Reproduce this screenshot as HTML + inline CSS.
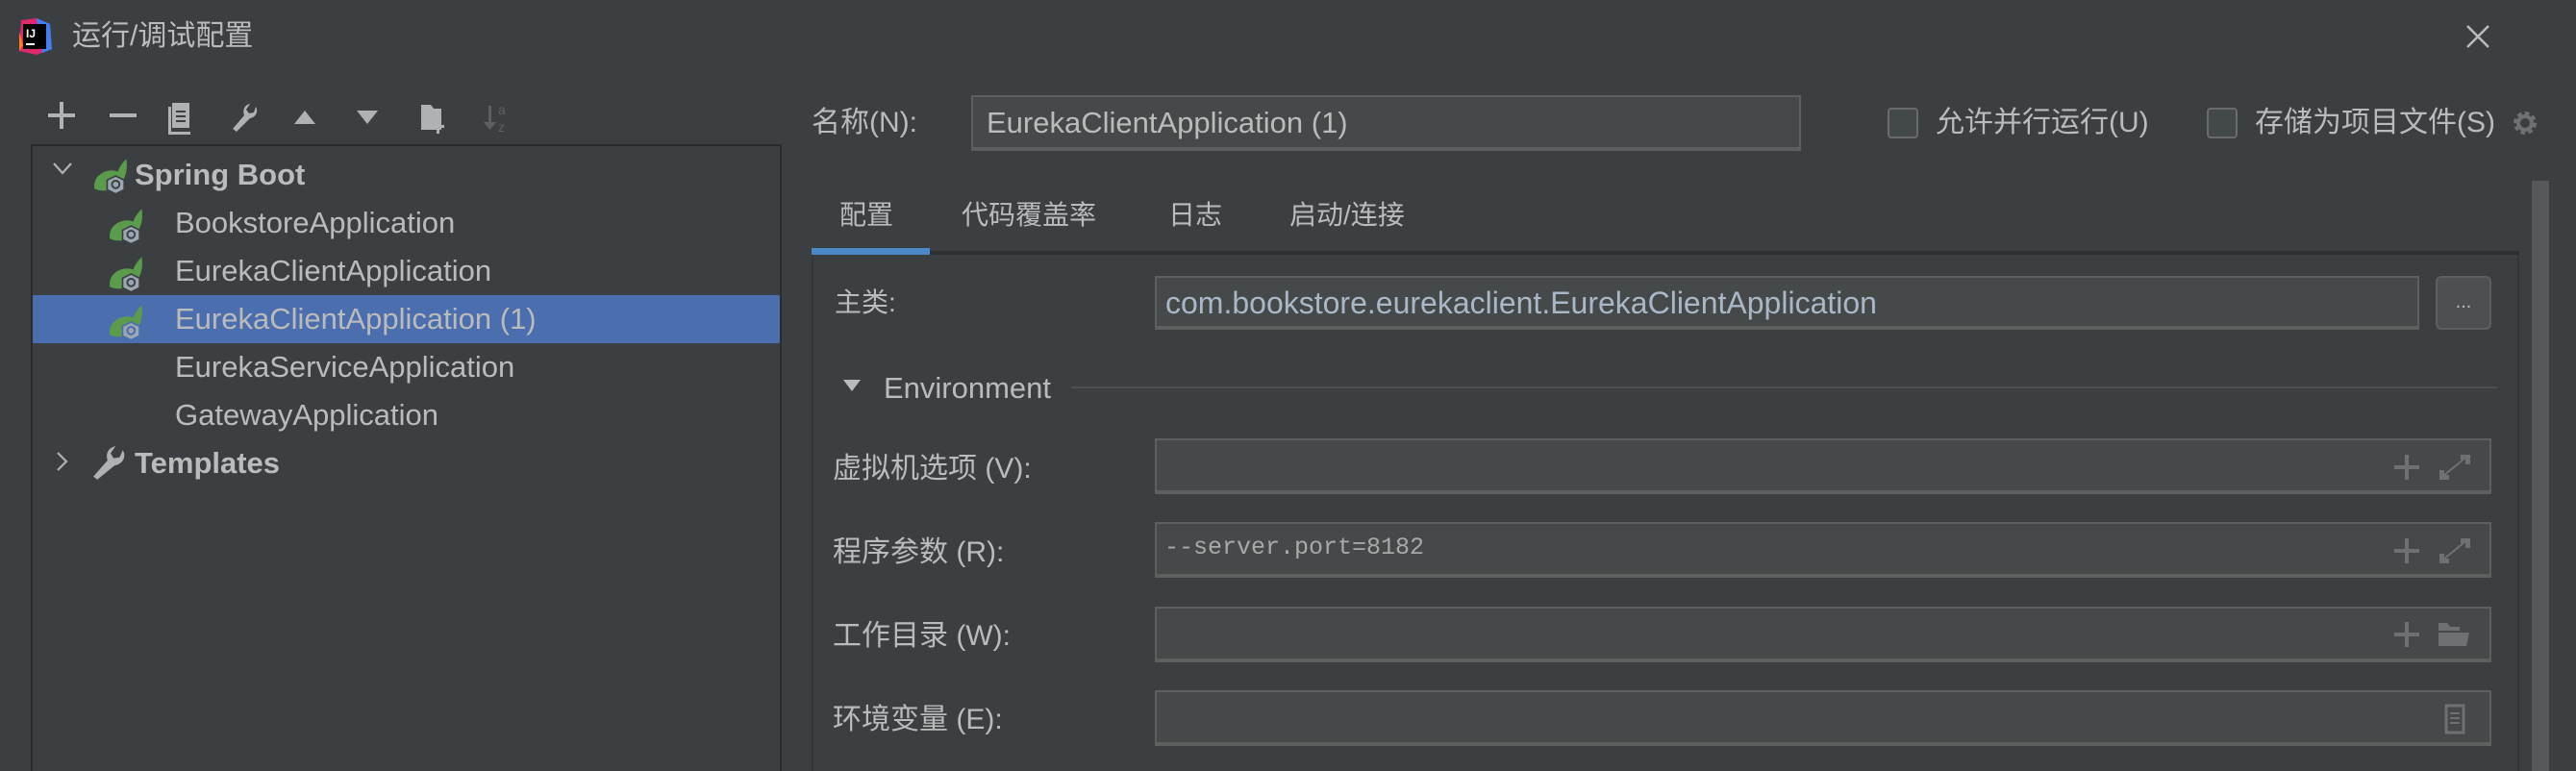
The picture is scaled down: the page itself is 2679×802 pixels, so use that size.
<!DOCTYPE html>
<html style="overflow:hidden;height:802px"><head><meta charset="utf-8"><style>
*{box-sizing:border-box;margin:0;padding:0}
body{width:2679px;height:802px;background:#3c3f41;overflow:hidden;position:relative;font-family:"Liberation Sans","Noto Sans CJK SC",sans-serif;color:#bbbbbb;font-size:28px}
.a{position:absolute;white-space:nowrap}
.inp{position:absolute;background:#45494a;border:2px solid #5e6060;border-bottom:4px solid #5e6060}
.lbl{position:absolute;line-height:40px;white-space:nowrap}
.row{position:absolute;left:0;height:50px;line-height:50px;font-size:31px;white-space:nowrap}
svg{position:absolute}
</style></head><body>
<svg style="left:16px;top:17px" width="40" height="42" viewBox="0 0 40 42">
<path d="M6 4 L22 2 L36 8 L38 34 L22 40 L4 36 Z" fill="#e0286f"/>
<path d="M22 2 L36 8 L38 34 L28 38 Z" fill="#3f7ff5"/>
<path d="M4 16 L8 30 L4 36Z" fill="#fc801d"/>
<rect x="8" y="8" width="24" height="26" fill="#000"/>
<text x="11" y="22" font-size="12" font-family="Liberation Sans" font-weight="bold" fill="#fff">IJ</text>
<rect x="11" y="28" width="9" height="2" fill="#fff"/>
</svg>
<div class="a" style="left:75px;top:16px;font-size:30px;line-height:44px;color:#bbbbbb">运行/调试配置</div>
<svg style="left:2563px;top:24px" width="28" height="28"><path d="M3 3L25 25M25 3L3 25" stroke="#bbb" stroke-width="2.5"/></svg>

<svg style="left:50px;top:104px" width="500" height="36" viewBox="0 0 500 34" fill="#afb1b3">
<rect x="0" y="13" width="28" height="4"/><rect x="12" y="1" width="4" height="28"/>
<rect x="64" y="13" width="28" height="4"/>
<path d="M129 2h18v26h-18z M125 6h3v26h20v3h-23z" /><rect x="133" y="10" width="10" height="2" fill="#3c3f41"/><rect x="133" y="15" width="10" height="2" fill="#3c3f41"/><rect x="133" y="20" width="10" height="2" fill="#3c3f41"/>
<path d="M196 32l-4-3 12-14c-2-5 0-11 6-12l-4 6 3 4 5-1 2-6c3 5 0 11-6 12z"/>
<path d="M256 24l11-14 11 14z"/>
<path d="M321 10h22l-11 14z"/>
<path d="M388 4h10l3 4h8v22h-21z"/><rect x="404" y="20" width="3" height="14"/><rect x="399" y="25" width="13" height="3"/>
<g fill="#5e6060"><rect x="458" y="5" width="3" height="22"/><path d="M453 22h13l-6.5 8z"/><text x="468" y="14" font-size="14" font-family="Liberation Sans">a</text><text x="468" y="32" font-size="14" font-family="Liberation Sans">z</text></g>
</svg>

<div style="position:absolute;left:32px;top:150px;width:781px;height:652px;border:2px solid #2b2b2b;border-bottom:none;background:#3c3f41;overflow:hidden">
<svg style="left:20px;top:16px" width="22" height="14"><path d="M2 2l9 10 9-10" stroke="#afb1b3" stroke-width="2.2" fill="none"/></svg>
<div class="row" style="top:5px;left:62px;width:700px">
<svg style="left:0;top:6px" width="42" height="40" viewBox="0 0 38 36"><path d="M2 30c-2-14 14-20 22-16 2-6 6-10 8-12 2 12-2 24-12 28-8 3-14 2-18 0z" fill="#5a9b4c"/><path d="M22 18l8 4v9l-8 4-8-4v-9z" fill="#9aa7b0" stroke="#3c3f41" stroke-width="1.5"/><circle cx="22" cy="26" r="3.5" fill="none" stroke="#3c3f41" stroke-width="1.8"/></svg>
<span style="position:absolute;left:44px;font-weight:bold;font-size:31px">Spring Boot</span></div>
<div class="row" style="top:55px;left:0;width:777px"><svg style="left:78px;top:8px" width="42" height="40" viewBox="0 0 38 36"><path d="M2 30c-2-14 14-20 22-16 2-6 6-10 8-12 2 12-2 24-12 28-8 3-14 2-18 0z" fill="#5a9b4c"/><path d="M22 18l8 4v9l-8 4-8-4v-9z" fill="#9aa7b0" stroke="#3c3f41" stroke-width="1.5"/><circle cx="22" cy="26" r="3.5" fill="none" stroke="#3c3f41" stroke-width="1.8"/></svg><span style="position:absolute;left:148px">BookstoreApplication</span></div>
<div class="row" style="top:105px;left:0;width:777px"><svg style="left:78px;top:8px" width="42" height="40" viewBox="0 0 38 36"><path d="M2 30c-2-14 14-20 22-16 2-6 6-10 8-12 2 12-2 24-12 28-8 3-14 2-18 0z" fill="#5a9b4c"/><path d="M22 18l8 4v9l-8 4-8-4v-9z" fill="#9aa7b0" stroke="#3c3f41" stroke-width="1.5"/><circle cx="22" cy="26" r="3.5" fill="none" stroke="#3c3f41" stroke-width="1.8"/></svg><span style="position:absolute;left:148px">EurekaClientApplication</span></div>
<div class="row" style="top:155px;left:0;width:777px;background:#4b6eaf"><svg style="left:78px;top:8px" width="42" height="40" viewBox="0 0 38 36"><path d="M2 30c-2-14 14-20 22-16 2-6 6-10 8-12 2 12-2 24-12 28-8 3-14 2-18 0z" fill="#5a9b4c"/><path d="M22 18l8 4v9l-8 4-8-4v-9z" fill="#9aa7b0" stroke="#4b6eaf" stroke-width="1.5"/><circle cx="22" cy="26" r="3.5" fill="none" stroke="#4b6eaf" stroke-width="1.8"/></svg><span style="position:absolute;left:148px">EurekaClientApplication (1)</span></div>
<div class="row" style="top:205px;left:148px">EurekaServiceApplication</div>
<div class="row" style="top:255px;left:148px">GatewayApplication</div>
<svg style="left:24px;top:317px" width="14" height="22"><path d="M2 2l9 9-9 9" stroke="#afb1b3" stroke-width="2.2" fill="none"/></svg>
<svg style="left:62px;top:311px" width="38" height="38" viewBox="0 0 36 36"><path d="M5 34l-4-3 14-16c-2-6 0-12 8-14l-5 7 3 5 6-1 3-7c4 6 0 14-8 15z" fill="#afb1b3"/></svg>
<div class="row" style="top:305px;left:106px;font-weight:bold">Templates</div>
</div>

<div class="lbl" style="left:844px;top:108px;font-size:30px">名称(N):</div>
<div class="inp" style="left:1010px;top:99px;width:863px;height:58px"></div>
<div class="lbl" style="left:1026px;top:108px;font-size:31px">EurekaClientApplication (1)</div>
<div class="a" style="left:1963px;top:112px;width:32px;height:32px;border:2px solid #6b6b6b;border-radius:4px;background:#43494a"></div>
<div class="lbl" style="left:2013px;top:108px;font-size:30px">允许并行运行(U)</div>
<div class="a" style="left:2295px;top:112px;width:32px;height:32px;border:2px solid #6b6b6b;border-radius:4px;background:#43494a"></div>
<div class="lbl" style="left:2345px;top:108px;font-size:30px">存储为项目文件(S)</div>
<svg style="left:2610px;top:112px" width="32" height="36" viewBox="0 0 32 36"><circle cx="16" cy="16" r="9" fill="none" stroke="#6e7072" stroke-width="6" stroke-dasharray="4 3"/><circle cx="16" cy="16" r="7" fill="none" stroke="#6e7072" stroke-width="4"/></svg>

<div class="a" style="left:2633px;top:188px;width:18px;height:614px;background:#55595b"></div>

<div class="lbl" style="left:873px;top:204px">配置</div>
<div class="lbl" style="left:1000px;top:204px">代码覆盖率</div>
<div class="lbl" style="left:1215px;top:204px">日志</div>
<div class="lbl" style="left:1341px;top:204px">启动/连接</div>
<div class="a" style="left:844px;top:261px;width:1776px;height:4px;background:#2e3032"></div>
<div class="a" style="left:844px;top:258px;width:123px;height:7px;background:#4a88c7"></div>
<div class="a" style="left:844px;top:265px;width:1776px;height:537px;border-left:2px solid #333537;border-right:2px solid #333537"></div>

<div class="lbl" style="left:868px;top:295px">主类:</div>
<div class="inp" style="left:1201px;top:287px;width:1315px;height:56px"></div>
<div class="lbl" style="left:1212px;top:295px;color:#a9b7c6;font-size:32px">com.bookstore.eurekaclient.EurekaClientApplication</div>
<div class="a" style="left:2533px;top:287px;width:58px;height:56px;background:#4c5052;border:2px solid #5e6060;border-radius:6px;text-align:center;line-height:50px;font-size:20px">...</div>

<svg style="left:876px;top:394px" width="20" height="14"><path d="M1 1h18l-9 12z" fill="#bbb"/></svg>
<div class="lbl" style="left:919px;top:384px;font-size:31px">Environment</div>
<div class="a" style="left:1114px;top:402px;width:1483px;height:2px;background:#4d5052"></div>

<div class="lbl" style="left:866px;top:468px;font-size:30px">虚拟机选项 (V):</div>
<div class="inp" style="left:1201px;top:456px;width:1390px;height:58px"></div>
<div class="lbl" style="left:866px;top:555px;font-size:30px">程序参数 (R):</div>
<div class="inp" style="left:1201px;top:543px;width:1390px;height:58px"></div>
<div class="lbl" style="left:1211px;top:550px;font-family:'Liberation Mono',monospace;font-size:25px;color:#a9a9a9">--server.port=8182</div>
<div class="lbl" style="left:866px;top:642px;font-size:30px">工作目录 (W):</div>
<div class="inp" style="left:1201px;top:631px;width:1390px;height:58px"></div>
<div class="lbl" style="left:866px;top:729px;font-size:30px">环境变量 (E):</div>
<div class="inp" style="left:1201px;top:718px;width:1390px;height:58px"></div>

<svg style="left:2490px;top:470px" width="90" height="300" viewBox="0 0 90 300" fill="#6e7072">
<rect x="0" y="14" width="26" height="4"/><rect x="11" y="3" width="4" height="26"/>
<path d="M48 28v-8l3 0v5h5v3z M70 4h8v8h-3v-5h-5z M51 25l22-18" stroke="#6e7072" stroke-width="2"/>
<g transform="translate(0,87)"><rect x="0" y="14" width="26" height="4"/><rect x="11" y="3" width="4" height="26"/>
<path d="M48 28v-8l3 0v5h5v3z M70 4h8v8h-3v-5h-5z M51 25l22-18" stroke="#6e7072" stroke-width="2"/></g>
<g transform="translate(0,174)"><rect x="0" y="14" width="26" height="4"/><rect x="11" y="3" width="4" height="26"/>
<path d="M46 4h9l3 4h10v4h-22z M46 14h32l-3 14h-29z"/></g>
<g transform="translate(0,261)"><rect x="54" y="3" width="18" height="28" fill="none" stroke="#6e7072" stroke-width="3"/><rect x="58" y="10" width="10" height="2"/><rect x="58" y="15" width="10" height="2"/><rect x="58" y="20" width="10" height="2"/></g>
</svg>
</body></html>
